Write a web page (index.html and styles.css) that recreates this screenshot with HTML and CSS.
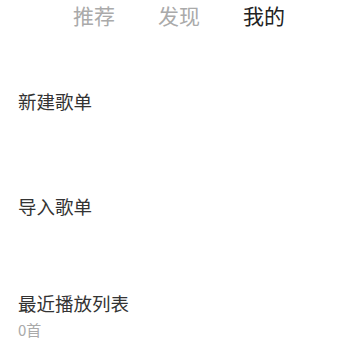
FILE: index.html
```html
<!DOCTYPE html>
<html lang="zh">
<head>
    <meta charset="UTF-8">
    <meta name="viewport" content="width=device-width, initial-scale=1.0">
    <title>我的</title>
<link rel="stylesheet" href="styles.css">
</head>
<body>
    <div class="tabs">
        <span class="tab">推荐</span>
        <span class="tab">发现</span>
        <span class="tab tab-active">我的</span>
    </div>

    <div class="list">
        <div class="item">
            <p class="item-title">新建歌单</p>
        </div>
        <div class="item">
            <p class="item-title">导入歌单</p>
        </div>
        <div class="item item-detail">
            <p class="item-title">最近播放列表</p>
            <p class="item-sub">0首</p>
        </div>
    </div>
</body>
</html>
```

FILE: styles.css
```css
body{
    margin: 0;
    background-color: white;
    font-family: "Noto Sans CJK SC", "Noto Sans", sans-serif;
}
.tabs{
    display: flex;
    justify-content: center;
    gap: 43px;
    height: 30px;
    padding-right: 2px;
}
.tab{
    font-size: 21px;
    line-height: 30px;
    color: #aaaaaa;
}
.tab-active{
    color: #222222;
}
.list{
    padding-top: 18px;
}
.item{
    height: 105px;
    padding-left: 18px;
    display: flex;
    flex-direction: column;
    justify-content: center;
}
.item-detail{
    height: 114px;
}
.item-title{
    margin: 0;
    font-size: 18.5px;
    line-height: 24px;
    color: #333333;
}
.item-sub{
    margin: 5px 0 0 0;
    font-size: 15px;
    line-height: 20px;
    color: #aaaaaa;
}
```
